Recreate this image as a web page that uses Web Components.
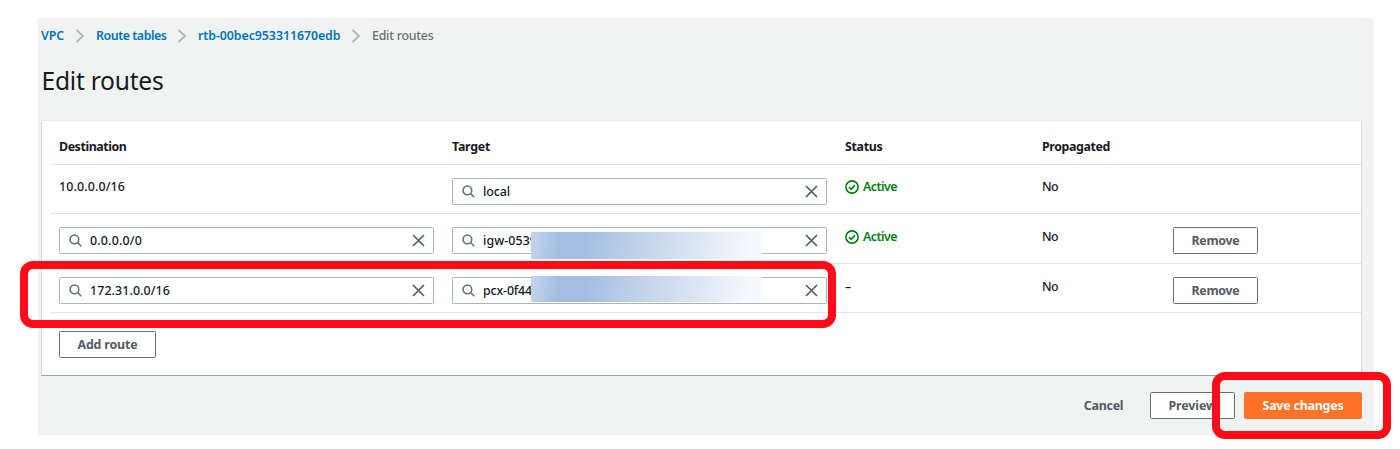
<!DOCTYPE html>
<html lang="en">
<head>
<meta charset="utf-8">
<title>Edit routes</title>
<style>
html,body{margin:0;padding:0;background:#fff}
body{width:1400px;height:449px;overflow:hidden;font-family:"Noto Sans","Open Sans",sans-serif;font-size:12.4px;font-weight:500;line-height:18px;color:#16191f}
</style>
</head>
<body>
<routes-page></routes-page>
<script>
const define=(name,html,setup)=>customElements.define(name,class extends HTMLElement{
  constructor(){super();const t=document.createElement('template');t.innerHTML=html;this.attachShadow({mode:'open'}).append(t.content.cloneNode(true));}
  connectedCallback(){if(setup)setup.call(this,this.shadowRoot);}
});

/* Label that tracks its letters so that the run has the width given in "w". */
define('fit-text',`<style>:host{display:inline-block;white-space:pre;vertical-align:top}span{display:inline-block}</style><span><slot></slot></span>`,function(r){
  const w=+this.getAttribute('w');if(!w)return;
  const s=r.querySelector('span'),n=this.textContent.length;
  s.style.letterSpacing='0px';
  s.style.letterSpacing=((w-s.getBoundingClientRect().width)/n).toFixed(3)+'px';
});

define('crumb-bar',`<style>
:host{display:flex;align-items:center;height:18px;color:#687078}
fit-text.l{color:#0073bb;font-weight:600}
svg{width:10px;height:14px;display:block;fill:none;stroke:#aab7b8;stroke-width:1.8}
</style>
<fit-text class="l" w="23">VPC</fit-text>
<svg style="margin:0 11px 0 11px" viewBox="0 0 10 14"><path d="M1.5 1 8 7 1.5 13"/></svg>
<fit-text class="l" w="70.5">Route tables</fit-text>
<svg style="margin:0 11px 0 10.5px" viewBox="0 0 10 14"><path d="M1.5 1 8 7 1.5 13"/></svg>
<fit-text class="l" w="142.5">rtb-00bec953311670edb</fit-text>
<svg style="margin:0 11px 0 10.5px" viewBox="0 0 10 14"><path d="M1.5 1 8 7 1.5 13"/></svg>
<fit-text w="61.5">Edit routes</fit-text>`);

define('ui-button',`<style>
:host{display:flex;box-sizing:border-box;height:27px;align-items:center;justify-content:center;border:1px solid #687078;border-radius:1.5px;background:#fff;color:#545b64;font-weight:700}
:host([kind=link]){border-color:transparent;background:none}
:host([kind=primary]){background:#ff7227;border-color:#ff7227;color:#fff}
</style><slot></slot>`);

define('search-field',`<style>
:host{display:flex;position:relative;box-sizing:border-box;width:375px;height:27px;align-items:center;border:1px solid #aab7b8;border-radius:1.5px;background:#fff;padding:0 8px 0 9px}
svg{display:block;fill:none}
.m{width:13px;height:13px;margin-right:8px;stroke:#687078;stroke-width:1.7}
.x{width:13px;height:13px;margin-left:auto;stroke:#545b64;stroke-width:1.6}
</style>
<svg class="m" viewBox="0 0 14 14"><circle cx="5.8" cy="5.8" r="4.7"/><path d="M9.2 9.2 13.2 13.2"/></svg>
<slot></slot>
<svg class="x" viewBox="0 0 13 13"><path d="M1 1 12 12M12 1 1 12"/></svg>
<slot name="cover"></slot>`);

define('redaction-bar',`<style>
:host{display:block;position:absolute;left:78px;width:231px;top:var(--top);height:var(--h);background:linear-gradient(97deg,#c4d5ec 0%,#a3bee1 13%,#a3bee1 23%,#c2d3ea 48%,#dfe8f4 74%,#f5f8fe 94%,#f7f9fe 100%)}
</style>`);

define('status-active',`<style>
:host{display:flex;align-items:center;height:18px;color:#037f0c;font-weight:600}
svg{width:14px;height:14px;margin-right:4px;fill:none;stroke:#037f0c;stroke-width:1.6}
</style><svg viewBox="0 0 14 14"><circle cx="7" cy="7" r="6.1"/><path d="M3.9 7.2 6.2 9.3 10 5.2"/></svg><fit-text w="34">Active</fit-text>`);

define('route-row',`<style>
:host{display:grid;grid-template-columns:393px 393px 197px 131px 1fr;box-sizing:border-box;height:var(--rh,49.5px);padding:13px 0 0 9px;border-bottom:1px solid #e1e4e5;align-items:start}
:host([head]){font-weight:700;padding-top:17px}
div{display:block}
</style><div><slot name="a"></slot></div><div><slot name="b"></slot></div><div><slot name="c"></slot></div><div><slot name="d"></slot></div><div><slot name="e"></slot></div>`);

define('highlight-box',`<style>
:host{display:block;position:absolute;box-sizing:border-box;border:8px solid #ff0b18;border-radius:13px;pointer-events:none}
</style>`);

define('routes-page',`<style>
:host{display:block;position:relative;width:1400px;height:449px}
.panel{display:flow-root;box-sizing:border-box;margin:0 26px 0 38px;height:435px;border-top:18px solid #fff;background:#f1f3f3}
crumb-bar{margin:9px 0 0 3px}
h1{margin:19px 0 0 3.5px;font-size:24.6px;line-height:34px;font-weight:450}
.card{box-sizing:border-box;margin:22px 12px 0 3px;width:1321px;height:256px;background:#fff;border:1px solid #d5dbdb;border-top-color:#eaeded;border-bottom-color:#98a3a5;padding:0 0 0 8px}
.e{width:85px}
.low{margin-top:1px}
.footer{display:flex;justify-content:flex-end;margin:16px 12px 0 0;gap:9px}
</style>
<div class="panel">
<crumb-bar></crumb-bar>
<h1><fit-text w="122">Edit routes</fit-text></h1>
<div class="card">
<route-row head style="--rh:44px">
<fit-text slot="a" w="67.5">Destination</fit-text><fit-text slot="b" w="38">Target</fit-text><fit-text slot="c" w="37.5">Status</fit-text><fit-text slot="d" w="68">Propagated</fit-text>
</route-row>
<route-row style="--rh:49px">
<fit-text slot="a" w="66">10.0.0.0/16</fit-text>
<search-field slot="b"><fit-text w="27">local</fit-text></search-field>
<status-active slot="c"></status-active>
<fit-text slot="d" w="16">No</fit-text>
</route-row>
<route-row style="--rh:50px">
<search-field slot="a"><fit-text w="52">0.0.0.0/0</fit-text></search-field>
<search-field slot="b"><fit-text w="54">igw-0539</fit-text><redaction-bar slot="cover" style="--top:4px;--h:27px"></redaction-bar></search-field>
<status-active slot="c" class="low"></status-active>
<fit-text slot="d" w="16" class="low">No</fit-text>
<ui-button class="e" slot="e"><fit-text w="48">Remove</fit-text></ui-button>
</route-row>
<route-row style="--rh:49px">
<search-field slot="a"><fit-text w="80">172.31.0.0/16</fit-text></search-field>
<search-field slot="b"><fit-text w="49">pcx-0f44</fit-text><redaction-bar slot="cover" style="--top:-2px;--h:26px"></redaction-bar></search-field>
<fit-text slot="c" w="7" class="low">–</fit-text>
<fit-text slot="d" w="16" class="low">No</fit-text>
<ui-button class="e" slot="e"><fit-text w="48">Remove</fit-text></ui-button>
</route-row>
<ui-button style="width:97px;margin:18px 0 0 9px"><fit-text w="60">Add route</fit-text></ui-button>
</div>
<div class="footer">
<ui-button kind="link" style="width:75px"><fit-text w="39.5">Cancel</fit-text></ui-button>
<ui-button style="width:85px"><fit-text w="48">Preview</fit-text></ui-button>
<ui-button kind="primary" style="width:118px"><fit-text w="81">Save changes</fit-text></ui-button>
</div>
</div>
<highlight-box style="left:20px;top:261px;width:816px;height:67px"></highlight-box>
<highlight-box style="left:1212px;top:372px;width:179px;height:67px"></highlight-box>`);
</script>
</body>
</html>
